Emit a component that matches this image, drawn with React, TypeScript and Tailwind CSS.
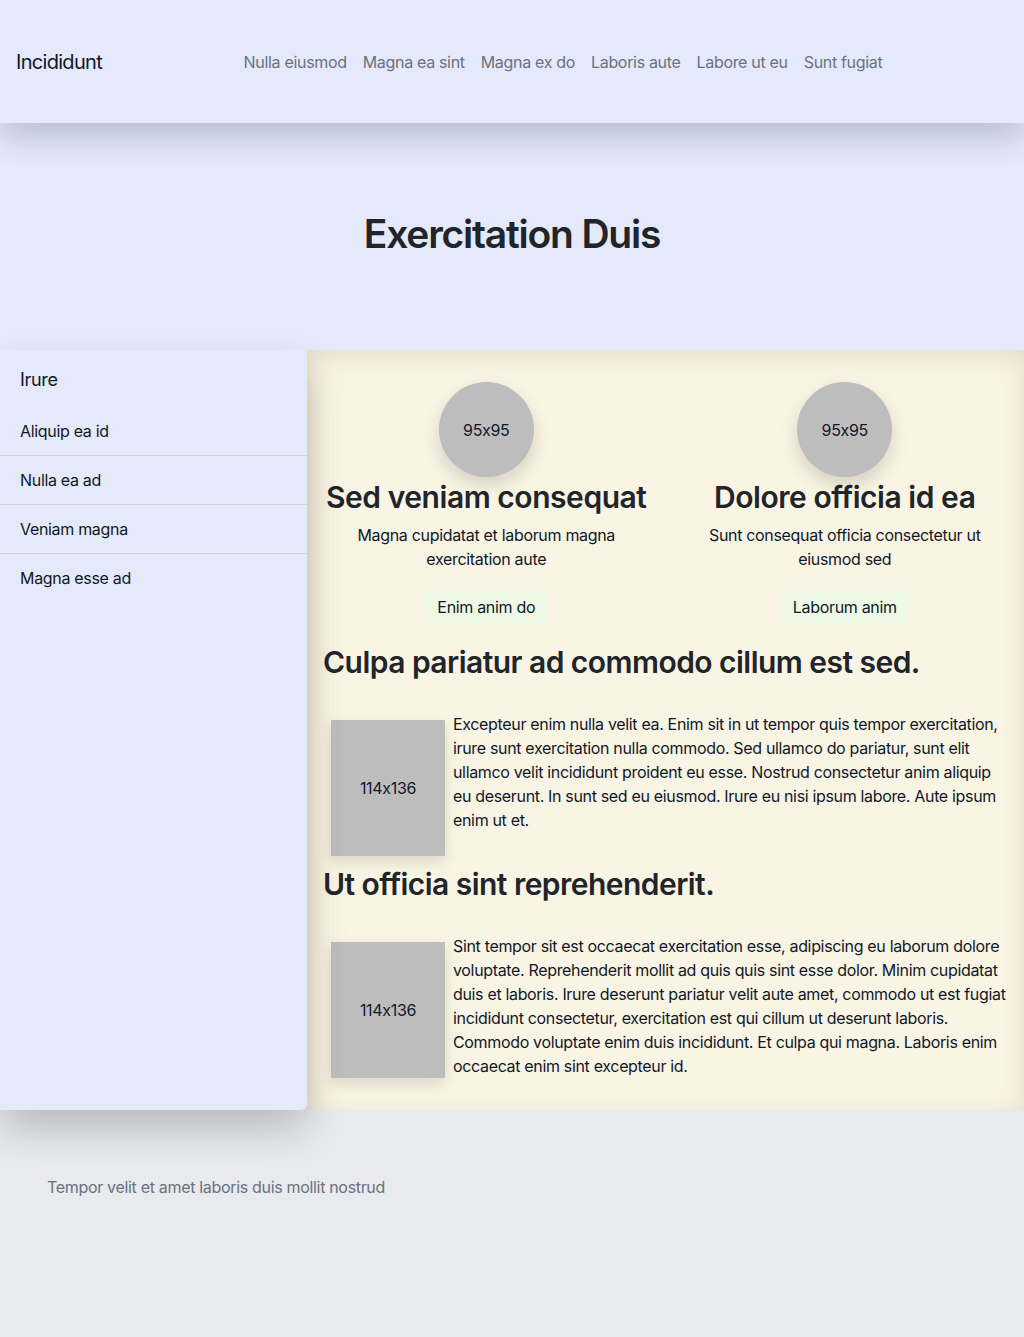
const navLinks = ["Nulla eiusmod", "Magna ea sint", "Magna ex do", "Laboris aute", "Labore ut eu", "Sunt fugiat"];

const sideItems = ["Aliquip ea id", "Nulla ea ad", "Veniam magna", "Magna esse ad"];

const cards = [
  {
    title: "Sed veniam consequat",
    text: "Magna cupidatat et laborum magna exercitation aute",
    action: "Enim anim do",
  },
  {
    title: "Dolore officia id ea",
    text: "Sunt consequat officia consectetur ut eiusmod sed",
    action: "Laborum anim",
  },
];

const articles = [
  {
    title: "Culpa pariatur ad commodo cillum est sed.",
    body: "Excepteur enim nulla velit ea. Enim sit in ut tempor quis tempor exercitation, irure sunt exercitation nulla commodo. Sed ullamco do pariatur, sunt elit ullamco velit incididunt proident eu esse. Nostrud consectetur anim aliquip eu deserunt. In sunt sed eu eiusmod. Irure eu nisi ipsum labore. Aute ipsum enim ut et.",
  },
  {
    title: "Ut officia sint reprehenderit.",
    body: "Sint tempor sit est occaecat exercitation esse, adipiscing eu laborum dolore voluptate. Reprehenderit mollit ad quis quis sint esse dolor. Minim cupidatat duis et laboris. Irure deserunt pariatur velit aute amet, commodo ut est fugiat incididunt consectetur, exercitation est qui cillum ut deserunt laboris. Commodo voluptate enim duis incididunt. Et culpa qui magna. Laboris enim occaecat enim sint excepteur id.",
  },
];

export default function App() {
  return (
    <div className="min-h-[1337px] flex flex-col bg-[#e9eaee] text-[#212529] tracking-[-0.02em] [font-feature-settings:'calt'_0] font-['Inter',_'Liberation_Sans',_sans-serif]">
      {/* header */}
      <header className="relative z-20 h-[123px] flex items-center pl-4 bg-[#e4e9fb] shadow-[0_14px_30px_rgba(40,50,90,0.24)]">
        <span className="text-xl tracking-[-0.035em] text-gray-900">Incididunt</span>
        <nav className="flex-1 flex justify-center gap-4">
          {navLinks.map((link) => (
            <a key={link} href="#" className="text-base text-gray-500">
              {link}
            </a>
          ))}
        </nav>
      </header>

      {/* hero */}
      <section className="h-[227px] flex items-center justify-center pb-1 bg-[#e4e9fb]">
        <h1 className="text-[39px] font-semibold tracking-[-0.031em] text-[#212529]">Exercitation Duis</h1>
      </section>

      {/* body */}
      <div className="flex">
        <aside className="relative z-10 w-[307px] shrink-0 bg-[#e5eafb] rounded-r-md shadow-[0_20px_40px_rgba(0,0,0,0.2)]">
          <h2 className="px-5 pt-4 pb-[13px] text-lg text-gray-900">Irure</h2>
          <ul>
            {sideItems.map((item, i) => (
              <li
                key={item}
                className={
                  i < sideItems.length - 1
                    ? "px-5 py-3 text-base text-gray-900 border-b border-[#cfd3de]"
                    : "px-5 py-3 text-base text-gray-900"
                }
              >
                {item}
              </li>
            ))}
          </ul>
        </aside>

        <main className="flex-1 bg-[#faf4e4] px-4 pt-8 pb-6 shadow-[inset_0_6px_24px_rgba(90,80,50,0.14)]">
          <div className="grid grid-cols-2 gap-8">
            {cards.map((card) => (
              <div key={card.title} className="flex flex-col items-center text-center">
                <div className="w-[95px] h-[95px] rounded-full bg-[#bdbdbd] flex items-center justify-center text-base text-gray-900 shadow-[0_8px_18px_rgba(0,0,0,0.15)]">
                  95x95
                </div>
                <h3 className="mt-0.5 text-[30px] leading-9 font-semibold tracking-[-0.015em] whitespace-nowrap">{card.title}</h3>
                <p className="mt-2 text-base leading-6 text-gray-900 px-2">{card.text}</p>
                <button className="mt-[18px] h-9 px-3 rounded-md bg-[#eefae6] text-base text-gray-900">{card.action}</button>
              </div>
            ))}
          </div>

          {articles.map((article, i) => (
            <article key={article.title} className={i === 0 ? "mt-[19px]" : "mt-0.5"}>
              <h3 className="text-[30px] leading-9 font-semibold tracking-[-0.018em]">{article.title}</h3>
              <div className="mt-8 flex items-start">
                <div className="m-2 w-[114px] h-[136px] shrink-0 bg-[#bdbdbd] flex items-center justify-center text-base text-gray-900 shadow-[0_6px_14px_rgba(0,0,0,0.12)]">
                  114x136
                </div>
                <p className="flex-1 text-base leading-6 text-gray-900 tracking-[-0.021em]">{article.body}</p>
              </div>
            </article>
          ))}
        </main>
      </div>

      {/* footer */}
      <footer className="flex-1 bg-[#e9eaee] px-[47px] pt-[65px]">
        <p className="text-base text-gray-500">Tempor velit et amet laboris duis mollit nostrud</p>
      </footer>
    </div>
  );
}
